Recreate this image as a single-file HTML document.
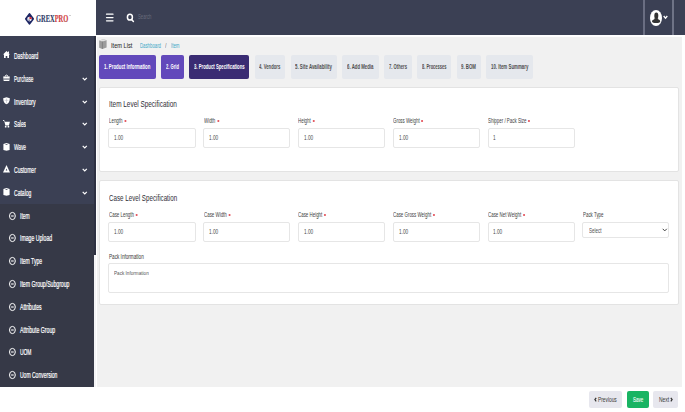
<!DOCTYPE html>
<html><head><meta charset="utf-8"><style>
*{margin:0;padding:0;box-sizing:border-box}
html,body{width:685px;height:412px;overflow:hidden;background:#fff;font-family:"Liberation Sans",sans-serif;position:relative}
.a{position:absolute}
.t{position:absolute;white-space:nowrap;line-height:1;transform-origin:0 0}
svg{position:absolute;overflow:visible}
</style></head><body>
<div class="a" style="left:0px;top:0px;width:96.00px;height:35.00px;background:#fff;"></div>
<div class="a" style="left:96px;top:0px;width:589.00px;height:35.00px;background:#3b4054;"></div>
<div class="a" style="left:0px;top:35.5px;width:94.00px;height:351.00px;background:#3b4054;"></div>
<div class="a" style="left:94px;top:35.5px;width:2.00px;height:351.00px;background:#f4f4f6;"></div>
<div class="a" style="left:0px;top:204px;width:94.00px;height:182.50px;background:#363947;"></div>
<div class="a" style="left:94px;top:35.5px;width:1.60px;height:219.00px;background:#2e3142;"></div>
<div class="a" style="left:96.5px;top:36.5px;width:585.50px;height:350.00px;background:#f1f1f1;"></div>
<svg style="left:105.6px;top:12px" width="8" height="10" viewBox="0 0 8 10"><path d="M0.5 2.2 H7 M0.5 5.5 H7 M0.5 8.8 H7" stroke="#fff" stroke-width="1.25" stroke-linecap="round"/></svg>
<svg style="left:126px;top:12.5px" width="9" height="10" viewBox="0 0 9 10"><ellipse cx="3.9" cy="4.2" rx="2.5" ry="2.9" fill="none" stroke="#fff" stroke-width="1.5"/><path d="M5.6 6.6 L7.4 8.5" stroke="#fff" stroke-width="1.5" stroke-linecap="round"/></svg>
<div class="t" style="left:137.90px;top:13px;font-size:7.2px;color:#6a6d7c;font-weight:normal;transform:scaleX(0.587);">Search</div>
<div class="a" style="left:643.2px;top:0px;width:1.80px;height:35.00px;background:#6a6e82;"></div>
<div class="a" style="left:672.3px;top:0px;width:1.50px;height:35.00px;background:#6f7386;"></div>
<svg style="left:650px;top:9.8px" width="12" height="16" viewBox="0 0 12 16"><ellipse cx="6" cy="8" rx="6" ry="8" fill="#fff"/><ellipse cx="6.3" cy="5.8" rx="2" ry="3.3" fill="#333"/><path d="M4.6 8.3 H8 L8.4 9.6 C9.6 10 10.3 10.8 10.2 11.6 C10.1 12.6 8.3 13.1 6.2 13.1 C4 13.1 2.2 12.6 2 11.6 C1.9 10.8 2.7 10 4.1 9.6Z" fill="#333"/></svg>
<svg style="left:662.6px;top:14.6px" width="5" height="4.5" viewBox="0 0 5 4.5"><path d="M0.7 1 L2.5 3.2 L4.3 1" fill="none" stroke="#fff" stroke-width="1.3"/></svg>
<svg style="left:25px;top:12.6px" width="9" height="11.8" viewBox="0 0 9 11.8"><path d="M4.5 1 L8.1 5.9 L4.5 10.8 L0.9 5.9Z" fill="#1b2462" stroke="#1b2462" stroke-width="1.8" stroke-linejoin="round"/><circle cx="4.5" cy="6.1" r="2.3" fill="#e8e8f0"/><path d="M4.5 6.1 L4.5 3.8 A2.3 2.3 0 0 1 6.8 6.1Z" fill="#d8232f"/><path d="M3.6 6.6 L4.6 6.6 L4.6 8.3 L3.6 7.9Z" fill="#4a4f7a"/></svg>
<div class="t" style="left:35.80px;top:14px;font-size:9.7px;color:#333;font-weight:bold;transform:scaleX(0.666);-webkit-text-stroke:0.12px #333;font-family:'Liberation Serif',serif;"><span style="color:#2c3a6e">GREX</span><span style="color:#e23a40">PRO</span></div>
<div class="a" style="left:69.2px;top:14.6px;width:1.40px;height:1.00px;background:#c8c8c8;border-radius:0.5px"></div>
<svg style="left:3.1px;top:51.40px" width="7" height="8" viewBox="0 0 7 8"><path d="M3.5 0 L7 3.6 H6 V7 H4.3 V4.9 H2.7 V7 H1 V3.6 H0Z" fill="#fff"/><path d="M4.9 0.4 H6 V2.4 L4.9 1.3Z" fill="#fff"/></svg>
<div class="t" style="left:14.10px;top:52px;font-size:8.4px;color:#fff;font-weight:normal;transform:scaleX(0.594);-webkit-text-stroke:0.2px #fff;">Dashboard</div>
<svg style="left:3.1px;top:74.20px" width="7" height="8" viewBox="0 0 7 8"><path d="M2.1 2.6 C2.1 0.6 4.9 0.6 4.9 2.6" fill="none" stroke="#fff" stroke-width="1"/><path d="M0.2 2.5 H6.8 L6.3 7.1 H0.7Z" fill="#fff"/><path d="M0.5 4.6 H6.5 V5.5 H0.5Z" fill="#3b4054"/></svg>
<div class="t" style="left:14.10px;top:75px;font-size:8.4px;color:#fff;font-weight:normal;transform:scaleX(0.547);-webkit-text-stroke:0.2px #fff;">Purchase</div>
<svg style="left:81.9px;top:76.70px" width="5.5" height="4" viewBox="0 0 5.5 4"><path d="M0.7 0.9 L2.75 3 L4.8 0.9" fill="none" stroke="#fff" stroke-width="1.2"/></svg>
<svg style="left:3.1px;top:97.00px" width="7" height="8" viewBox="0 0 7 8"><path d="M3.5 0.2 L6.8 1.3 C6.8 4.8 5.6 6.6 3.5 7.3 C1.4 6.6 0.2 4.8 0.2 1.3Z" fill="#fff"/><path d="M3.5 1.5 V6.2 M1.6 3.3 H5.4" stroke="#b9bbc4" stroke-width="0.6"/></svg>
<div class="t" style="left:13.60px;top:98px;font-size:8.4px;color:#fff;font-weight:normal;transform:scaleX(0.631);-webkit-text-stroke:0.2px #fff;">Inventory</div>
<svg style="left:81.9px;top:99.50px" width="5.5" height="4" viewBox="0 0 5.5 4"><path d="M0.7 0.9 L2.75 3 L4.8 0.9" fill="none" stroke="#fff" stroke-width="1.2"/></svg>
<svg style="left:3.1px;top:119.80px" width="7" height="8" viewBox="0 0 7 8"><path d="M0.1 0.3 L1.7 1.2" stroke="#fff" stroke-width="1"/><path d="M1.4 1.8 H6.9 L5.9 5.5 H2.4Z" fill="#fff"/><circle cx="2.7" cy="6.7" r="0.9" fill="#fff"/><circle cx="5.4" cy="6.7" r="0.9" fill="#fff"/></svg>
<div class="t" style="left:13.60px;top:120px;font-size:8.4px;color:#fff;font-weight:normal;transform:scaleX(0.571);-webkit-text-stroke:0.2px #fff;">Sales</div>
<svg style="left:81.9px;top:122.30px" width="5.5" height="4" viewBox="0 0 5.5 4"><path d="M0.7 0.9 L2.75 3 L4.8 0.9" fill="none" stroke="#fff" stroke-width="1.2"/></svg>
<svg style="left:3.1px;top:142.60px" width="7" height="8" viewBox="0 0 7 8"><path d="M0.4 1 L3.5 0 L6.6 1 V7 L3.5 7.8 L0.4 7Z" fill="#fff"/><path d="M2.3 1.2 H4.7 L4.2 2 H2.8Z" fill="#3b4054"/></svg>
<div class="t" style="left:13.60px;top:143px;font-size:8.4px;color:#fff;font-weight:normal;transform:scaleX(0.567);-webkit-text-stroke:0.2px #fff;">Wave</div>
<svg style="left:81.9px;top:145.10px" width="5.5" height="4" viewBox="0 0 5.5 4"><path d="M0.7 0.9 L2.75 3 L4.8 0.9" fill="none" stroke="#fff" stroke-width="1.2"/></svg>
<svg style="left:3.1px;top:165.40px" width="7" height="8" viewBox="0 0 7 8"><path d="M3.5 0 L7 7.6 H0Z" fill="#fff"/><path d="M3.5 3.6 L4.3 5.6 H2.7Z" fill="#3b4054"/></svg>
<div class="t" style="left:13.60px;top:166px;font-size:8.4px;color:#fff;font-weight:normal;transform:scaleX(0.601);-webkit-text-stroke:0.2px #fff;">Customer</div>
<svg style="left:81.9px;top:167.90px" width="5.5" height="4" viewBox="0 0 5.5 4"><path d="M0.7 0.9 L2.75 3 L4.8 0.9" fill="none" stroke="#fff" stroke-width="1.2"/></svg>
<svg style="left:3.1px;top:188.20px" width="7" height="8" viewBox="0 0 7 8"><path d="M0.4 1 L3.5 0 L6.6 1 V7 L3.5 7.8 L0.4 7Z" fill="#fff"/><path d="M2.3 1.2 H4.7 L4.2 2 H2.8Z" fill="#3b4054"/></svg>
<div class="t" style="left:13.60px;top:189px;font-size:8.4px;color:#fff;font-weight:normal;transform:scaleX(0.601);-webkit-text-stroke:0.2px #fff;">Catalog</div>
<svg style="left:81.9px;top:190.70px" width="5.5" height="4" viewBox="0 0 5.5 4"><path d="M0.7 0.9 L2.75 3 L4.8 0.9" fill="none" stroke="#fff" stroke-width="1.2"/></svg>
<svg style="left:9px;top:211.60px" width="7" height="8" viewBox="0 0 7 8"><ellipse cx="3.4" cy="4" rx="2.9" ry="3.6" fill="none" stroke="#fff" stroke-width="1"/><path d="M2.1 4 H4.7" stroke="#fff" stroke-width="1.1"/></svg>
<div class="t" style="left:19.70px;top:212px;font-size:8.4px;color:#fff;font-weight:normal;transform:scaleX(0.594);-webkit-text-stroke:0.2px #fff;">Item</div>
<svg style="left:9px;top:234.40px" width="7" height="8" viewBox="0 0 7 8"><ellipse cx="3.4" cy="4" rx="2.9" ry="3.6" fill="none" stroke="#fff" stroke-width="1"/><path d="M2.1 4 H4.7" stroke="#fff" stroke-width="1.1"/></svg>
<div class="t" style="left:19.70px;top:234px;font-size:8.4px;color:#fff;font-weight:normal;transform:scaleX(0.616);-webkit-text-stroke:0.2px #fff;">Image Upload</div>
<svg style="left:9px;top:257.20px" width="7" height="8" viewBox="0 0 7 8"><ellipse cx="3.4" cy="4" rx="2.9" ry="3.6" fill="none" stroke="#fff" stroke-width="1"/><path d="M2.1 4 H4.7" stroke="#fff" stroke-width="1.1"/></svg>
<div class="t" style="left:19.70px;top:257px;font-size:8.4px;color:#fff;font-weight:normal;transform:scaleX(0.602);-webkit-text-stroke:0.2px #fff;">Item Type</div>
<svg style="left:9px;top:280.00px" width="7" height="8" viewBox="0 0 7 8"><ellipse cx="3.4" cy="4" rx="2.9" ry="3.6" fill="none" stroke="#fff" stroke-width="1"/><path d="M2.1 4 H4.7" stroke="#fff" stroke-width="1.1"/></svg>
<div class="t" style="left:19.70px;top:280px;font-size:8.4px;color:#fff;font-weight:normal;transform:scaleX(0.614);-webkit-text-stroke:0.2px #fff;">Item Group/Subgroup</div>
<svg style="left:9px;top:302.80px" width="7" height="8" viewBox="0 0 7 8"><ellipse cx="3.4" cy="4" rx="2.9" ry="3.6" fill="none" stroke="#fff" stroke-width="1"/><path d="M2.1 4 H4.7" stroke="#fff" stroke-width="1.1"/></svg>
<div class="t" style="left:19.70px;top:303px;font-size:8.4px;color:#fff;font-weight:normal;transform:scaleX(0.612);-webkit-text-stroke:0.2px #fff;">Attributes</div>
<svg style="left:9px;top:325.60px" width="7" height="8" viewBox="0 0 7 8"><ellipse cx="3.4" cy="4" rx="2.9" ry="3.6" fill="none" stroke="#fff" stroke-width="1"/><path d="M2.1 4 H4.7" stroke="#fff" stroke-width="1.1"/></svg>
<div class="t" style="left:19.70px;top:326px;font-size:8.4px;color:#fff;font-weight:normal;transform:scaleX(0.620);-webkit-text-stroke:0.2px #fff;">Attribute Group</div>
<svg style="left:9px;top:348.40px" width="7" height="8" viewBox="0 0 7 8"><ellipse cx="3.4" cy="4" rx="2.9" ry="3.6" fill="none" stroke="#fff" stroke-width="1"/><path d="M2.1 4 H4.7" stroke="#fff" stroke-width="1.1"/></svg>
<div class="t" style="left:19.70px;top:348px;font-size:8.4px;color:#fff;font-weight:normal;transform:scaleX(0.587);-webkit-text-stroke:0.2px #fff;">UOM</div>
<svg style="left:9px;top:371.20px" width="7" height="8" viewBox="0 0 7 8"><ellipse cx="3.4" cy="4" rx="2.9" ry="3.6" fill="none" stroke="#fff" stroke-width="1"/><path d="M2.1 4 H4.7" stroke="#fff" stroke-width="1.1"/></svg>
<div class="t" style="left:19.70px;top:371px;font-size:8.4px;color:#fff;font-weight:normal;transform:scaleX(0.599);-webkit-text-stroke:0.2px #fff;">Uom Conversion</div>
<svg style="left:98.8px;top:38.8px" width="8" height="10" viewBox="0 0 8 10"><path d="M0.2 1.6 L4.4 0.2 L7.6 1.2 V8.6 L3.4 9.9 L0.2 8.8Z" fill="#9c9c9c"/><path d="M0.2 1.6 L4.4 0.2 L7.6 1.2 L3.4 2.5Z" fill="#e2e2e2"/><path d="M3.4 2.5 V9.9" stroke="#6f6f6f" stroke-width="0.6"/></svg>
<div class="t" style="left:110.50px;top:43px;font-size:6.8px;color:#2a2a2a;font-weight:normal;transform:scaleX(0.829);-webkit-text-stroke:0.05px #2a2a2a;">Item List</div>
<div class="t" style="left:140.20px;top:43px;font-size:6.9px;color:#3ba7c7;font-weight:normal;transform:scaleX(0.622);">Dashboard</div>
<div class="t" style="left:164.90px;top:43px;font-size:6.9px;color:#777;font-weight:normal;transform:scaleX(0.800);">/</div>
<div class="t" style="left:170.50px;top:43px;font-size:6.9px;color:#3ba7c7;font-weight:normal;transform:scaleX(0.633);">Item</div>
<div class="a" style="left:99px;top:54.5px;width:56.50px;height:24.50px;background:#6249bb;border-radius:2px"></div>
<div class="t" style="left:104.05px;top:64px;font-size:6.4px;color:#fff;font-weight:bold;transform:scaleX(0.680);">1. Product Information</div>
<div class="a" style="left:160.5px;top:54.5px;width:23.00px;height:24.50px;background:#6249bb;border-radius:2px"></div>
<div class="t" style="left:165.55px;top:64px;font-size:6.4px;color:#fff;font-weight:bold;transform:scaleX(0.636);">2. Grid</div>
<div class="a" style="left:188.6px;top:54.5px;width:60.60px;height:24.50px;background:#3a2c73;border-radius:2px"></div>
<div class="t" style="left:193.55px;top:64px;font-size:6.4px;color:#fff;font-weight:bold;transform:scaleX(0.663);">3. Product Specifications</div>
<div class="a" style="left:254.5px;top:54.5px;width:30.60px;height:24.50px;background:#e5e8ed;border-radius:2px"></div>
<div class="t" style="left:259.15px;top:64px;font-size:6.4px;color:#4e4e4e;font-weight:bold;transform:scaleX(0.658);">4. Vendors</div>
<div class="a" style="left:290.5px;top:54.5px;width:46.80px;height:24.50px;background:#e5e8ed;border-radius:2px"></div>
<div class="t" style="left:295.45px;top:64px;font-size:6.4px;color:#4e4e4e;font-weight:bold;transform:scaleX(0.684);">5. Site Availability</div>
<div class="a" style="left:342.3px;top:54.5px;width:36.50px;height:24.50px;background:#e5e8ed;border-radius:2px"></div>
<div class="t" style="left:347.30px;top:64px;font-size:6.4px;color:#4e4e4e;font-weight:bold;transform:scaleX(0.675);">6. Add Media</div>
<div class="a" style="left:383.9px;top:54.5px;width:27.70px;height:24.50px;background:#e5e8ed;border-radius:2px"></div>
<div class="t" style="left:388.75px;top:64px;font-size:6.4px;color:#4e4e4e;font-weight:bold;transform:scaleX(0.649);">7. Others</div>
<div class="a" style="left:417.2px;top:54.5px;width:33.60px;height:24.50px;background:#e5e8ed;border-radius:2px"></div>
<div class="t" style="left:421.80px;top:64px;font-size:6.4px;color:#4e4e4e;font-weight:bold;transform:scaleX(0.623);">8. Processes</div>
<div class="a" style="left:456.5px;top:54.5px;width:24.10px;height:24.50px;background:#e5e8ed;border-radius:2px"></div>
<div class="t" style="left:461.05px;top:64px;font-size:6.4px;color:#4e4e4e;font-weight:bold;transform:scaleX(0.680);">9. BOM</div>
<div class="a" style="left:486.3px;top:54.5px;width:47.00px;height:24.50px;background:#e5e8ed;border-radius:2px"></div>
<div class="t" style="left:491.10px;top:64px;font-size:6.4px;color:#4e4e4e;font-weight:bold;transform:scaleX(0.683);">10. Item Summary</div>
<div class="a" style="left:99px;top:86.8px;width:579.6px;height:85.20px;background:#fff;border:0.8px solid #e3e3e3;border-radius:2px"></div>
<div class="t" style="left:109.10px;top:99px;font-size:9.8px;color:#2e2e36;font-weight:normal;transform:scaleX(0.656);">Item Level Specification</div>
<div class="t" style="left:108.80px;top:118px;font-size:6.3px;color:#3d3d3d;font-weight:normal;transform:scaleX(0.700);">Length<span style="display:inline-block;width:3px;height:2.2px;border-radius:50%;background:#e3515a;margin-left:2.4px;vertical-align:1px"></span></div>
<div class="a" style="left:108.30px;top:128.3px;width:87.40px;height:19.30px;background:#fff;border:1px solid #e6e6e6;border-radius:2px;"></div>
<div class="t" style="left:114.10px;top:135px;font-size:6.6px;color:#4a4a4a;font-weight:normal;transform:scaleX(0.720);">1.00</div>
<div class="t" style="left:203.60px;top:118px;font-size:6.3px;color:#3d3d3d;font-weight:normal;transform:scaleX(0.700);">Width<span style="display:inline-block;width:3px;height:2.2px;border-radius:50%;background:#e3515a;margin-left:2.4px;vertical-align:1px"></span></div>
<div class="a" style="left:203.10px;top:128.3px;width:87.40px;height:19.30px;background:#fff;border:1px solid #e6e6e6;border-radius:2px;"></div>
<div class="t" style="left:208.90px;top:135px;font-size:6.6px;color:#4a4a4a;font-weight:normal;transform:scaleX(0.720);">1.00</div>
<div class="t" style="left:298.40px;top:118px;font-size:6.3px;color:#3d3d3d;font-weight:normal;transform:scaleX(0.700);">Height<span style="display:inline-block;width:3px;height:2.2px;border-radius:50%;background:#e3515a;margin-left:2.4px;vertical-align:1px"></span></div>
<div class="a" style="left:297.90px;top:128.3px;width:87.40px;height:19.30px;background:#fff;border:1px solid #e6e6e6;border-radius:2px;"></div>
<div class="t" style="left:303.70px;top:135px;font-size:6.6px;color:#4a4a4a;font-weight:normal;transform:scaleX(0.720);">1.00</div>
<div class="t" style="left:393.20px;top:118px;font-size:6.3px;color:#3d3d3d;font-weight:normal;transform:scaleX(0.700);">Gross Weight<span style="display:inline-block;width:3px;height:2.2px;border-radius:50%;background:#e3515a;margin-left:2.4px;vertical-align:1px"></span></div>
<div class="a" style="left:392.70px;top:128.3px;width:87.40px;height:19.30px;background:#fff;border:1px solid #e6e6e6;border-radius:2px;"></div>
<div class="t" style="left:398.50px;top:135px;font-size:6.6px;color:#4a4a4a;font-weight:normal;transform:scaleX(0.720);">1.00</div>
<div class="t" style="left:488.00px;top:118px;font-size:6.3px;color:#3d3d3d;font-weight:normal;transform:scaleX(0.700);">Shipper / Pack Size<span style="display:inline-block;width:3px;height:2.2px;border-radius:50%;background:#e3515a;margin-left:2.4px;vertical-align:1px"></span></div>
<div class="a" style="left:487.50px;top:128.3px;width:87.40px;height:19.30px;background:#fff;border:1px solid #e6e6e6;border-radius:2px;"></div>
<div class="t" style="left:493.30px;top:135px;font-size:6.6px;color:#4a4a4a;font-weight:normal;transform:scaleX(0.720);">1</div>
<div class="a" style="left:99px;top:180.1px;width:579.6px;height:125.10px;background:#fff;border:0.8px solid #e3e3e3;border-radius:2px"></div>
<div class="t" style="left:109.10px;top:193px;font-size:9.8px;color:#2e2e36;font-weight:normal;transform:scaleX(0.635);">Case Level Specification</div>
<div class="t" style="left:108.80px;top:212px;font-size:6.3px;color:#3d3d3d;font-weight:normal;transform:scaleX(0.700);">Case Length<span style="display:inline-block;width:3px;height:2.2px;border-radius:50%;background:#e3515a;margin-left:2.4px;vertical-align:1px"></span></div>
<div class="a" style="left:108.30px;top:222px;width:87.40px;height:19.50px;background:#fff;border:1px solid #e6e6e6;border-radius:2px;"></div>
<div class="t" style="left:114.10px;top:229px;font-size:6.6px;color:#4a4a4a;font-weight:normal;transform:scaleX(0.720);">1.00</div>
<div class="t" style="left:203.60px;top:212px;font-size:6.3px;color:#3d3d3d;font-weight:normal;transform:scaleX(0.700);">Case Width<span style="display:inline-block;width:3px;height:2.2px;border-radius:50%;background:#e3515a;margin-left:2.4px;vertical-align:1px"></span></div>
<div class="a" style="left:203.10px;top:222px;width:87.40px;height:19.50px;background:#fff;border:1px solid #e6e6e6;border-radius:2px;"></div>
<div class="t" style="left:208.90px;top:229px;font-size:6.6px;color:#4a4a4a;font-weight:normal;transform:scaleX(0.720);">1.00</div>
<div class="t" style="left:298.40px;top:212px;font-size:6.3px;color:#3d3d3d;font-weight:normal;transform:scaleX(0.700);">Case Height<span style="display:inline-block;width:3px;height:2.2px;border-radius:50%;background:#e3515a;margin-left:2.4px;vertical-align:1px"></span></div>
<div class="a" style="left:297.90px;top:222px;width:87.40px;height:19.50px;background:#fff;border:1px solid #e6e6e6;border-radius:2px;"></div>
<div class="t" style="left:303.70px;top:229px;font-size:6.6px;color:#4a4a4a;font-weight:normal;transform:scaleX(0.720);">1.00</div>
<div class="t" style="left:393.20px;top:212px;font-size:6.3px;color:#3d3d3d;font-weight:normal;transform:scaleX(0.700);">Case Gross Weight<span style="display:inline-block;width:3px;height:2.2px;border-radius:50%;background:#e3515a;margin-left:2.4px;vertical-align:1px"></span></div>
<div class="a" style="left:392.70px;top:222px;width:87.40px;height:19.50px;background:#fff;border:1px solid #e6e6e6;border-radius:2px;"></div>
<div class="t" style="left:398.50px;top:229px;font-size:6.6px;color:#4a4a4a;font-weight:normal;transform:scaleX(0.720);">1.00</div>
<div class="t" style="left:488.00px;top:212px;font-size:6.3px;color:#3d3d3d;font-weight:normal;transform:scaleX(0.700);">Case Net Weight<span style="display:inline-block;width:3px;height:2.2px;border-radius:50%;background:#e3515a;margin-left:2.4px;vertical-align:1px"></span></div>
<div class="a" style="left:487.50px;top:222px;width:87.40px;height:19.50px;background:#fff;border:1px solid #e6e6e6;border-radius:2px;"></div>
<div class="t" style="left:493.30px;top:229px;font-size:6.6px;color:#4a4a4a;font-weight:normal;transform:scaleX(0.720);">1.00</div>
<div class="t" style="left:582.80px;top:212px;font-size:6.3px;color:#3d3d3d;font-weight:normal;transform:scaleX(0.700);">Pack Type</div>
<div class="a" style="left:582.30px;top:222.3px;width:87.20px;height:15.30px;background:#fff;border:1px solid #e6e6e6;border-radius:2px;"></div>
<div class="t" style="left:589.00px;top:228px;font-size:6.6px;color:#505050;font-weight:normal;transform:scaleX(0.682);">Select</div>
<svg style="left:661.90px;top:228.4px" width="5.5" height="4" viewBox="0 0 5.5 4"><path d="M0.7 0.8 L2.75 2.9 L4.8 0.8" fill="none" stroke="#444" stroke-width="1"/></svg>
<div class="t" style="left:109.10px;top:254px;font-size:6.3px;color:#3a3a3a;font-weight:normal;transform:scaleX(0.736);-webkit-text-stroke:0.03px #3a3a3a;">Pack Information</div>
<div class="a" style="left:108.30px;top:263px;width:561.00px;height:29.60px;background:#fff;border:1px solid #e6e6e6;border-radius:2px;"></div>
<div class="t" style="left:114.20px;top:270px;font-size:6.1px;color:#555;font-weight:normal;transform:scaleX(0.760);">Pack Information</div>
<div class="a" style="left:589.2px;top:391.3px;width:33.00px;height:16.30px;background:#e7e7ee;border-radius:2px"></div>
<svg style="left:594.2px;top:396.6px" width="3" height="5" viewBox="0 0 3 5"><path d="M2.2 0.9 L0.9 2.6 L2.2 4.3" fill="none" stroke="#333" stroke-width="1.2"/></svg>
<div class="t" style="left:598.30px;top:396px;font-size:7.0px;color:#3a3a3a;font-weight:normal;transform:scaleX(0.687);-webkit-text-stroke:0.03px #3a3a3a;">Previous</div>
<div class="a" style="left:627.2px;top:391.3px;width:21.40px;height:16.30px;background:#19b463;border-radius:2px"></div>
<div class="t" style="left:632.60px;top:396px;font-size:7.0px;color:#fff;font-weight:normal;transform:scaleX(0.633);-webkit-text-stroke:0.1px #fff;">Save</div>
<div class="a" style="left:653.2px;top:391.3px;width:25.00px;height:16.30px;background:#e7e7ee;border-radius:2px"></div>
<div class="t" style="left:658.80px;top:396px;font-size:7.0px;color:#3a3a3a;font-weight:normal;transform:scaleX(0.702);-webkit-text-stroke:0.03px #3a3a3a;">Next</div>
<svg style="left:670.3px;top:396.6px" width="3" height="5" viewBox="0 0 3 5"><path d="M0.8 0.9 L2.1 2.6 L0.8 4.3" fill="none" stroke="#333" stroke-width="1.2"/></svg>
</body></html>
